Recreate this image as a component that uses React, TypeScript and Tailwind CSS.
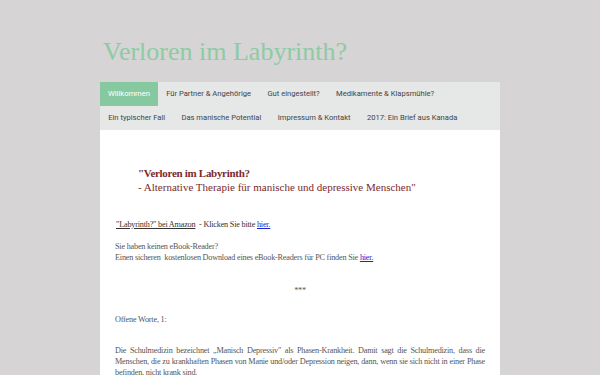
const NAV_ROW_1 = [
  { label: "Willkommen", active: true },
  { label: "Für Partner & Angehörige" },
  { label: "Gut eingestellt?" },
  { label: "Medikamente & Klapsmühle?" },
];

const NAV_ROW_2 = [
  { label: "Ein typischer Fall" },
  { label: "Das manische Potential" },
  { label: "Impressum & Kontakt" },
  { label: "2017: Ein Brief aus Kanada" },
];

function NavRow({ items }: { items: { label: string; active?: boolean }[] }) {
  return (
    <div className="flex h-6 items-stretch">
      {items.map((item) => (
        <a
          key={item.label}
          href="#"
          className={
            item.active
              ? "flex items-center whitespace-nowrap bg-[#86c9a1] px-[8px] text-white"
              : "flex items-center whitespace-nowrap px-[8.2px] text-[#444]"
          }
        >
          {item.label}
        </a>
      ))}
    </div>
  );
}

export default function App() {
  return (
    <div className="min-h-[375px] bg-[#d6d4d4] [font-family:'Liberation_Serif',serif]">
      <div className="mx-auto w-[400px]">
        <header className="h-[82px] pl-[3px] pt-[39px]">
          <h1 className="text-[26px] leading-none text-[#8dcba4]">Verloren im Labyrinth?</h1>
        </header>

        <nav className="bg-[#e6e7e7] text-[7.6px] [font-family:Roboto,sans-serif]">
          <NavRow items={NAV_ROW_1} />
          <NavRow items={NAV_ROW_2} />
        </nav>

        <main className="bg-white px-[15px] pb-4 pt-[36px] text-[8.2px] leading-[11px] tracking-[-0.2px] text-[#555]">
          <div className="pl-[23px] text-[11px] leading-[14px] tracking-normal text-[#7b2a2a]">
            <p className="font-bold tracking-[-0.3px]">"Verloren im Labyrinth?</p>
            <p>- Alternative Therapie für manische und depressive Menschen"</p>
          </div>

          <p className="mt-[25px] pl-[1px] text-[#333]">
            <span className="underline">"Labyrinth?" bei Amazon</span>
            &nbsp; - Klicken Sie bitte{" "}
            <a href="#" className="text-[#2222cc] underline">
              hier.
            </a>
          </p>

          <p className="mt-[11px]">
            Sie haben keinen eBook-Reader?
            <br />
            Einen sicheren&nbsp; kostenlosen Download eines eBook-Readers für PC finden Sie{" "}
            <a href="#" className="text-[#2222cc] underline">
              hier.
            </a>
          </p>

          <p className="mt-[22px] text-center">***</p>

          <p className="mt-[18px]">Offene Worte, 1:</p>

          <p className="mt-[20px] text-justify">
            Die Schulmedizin bezeichnet „Manisch Depressiv" als Phasen-Krankheit. Damit sagt die
            Schulmedizin, dass die Menschen, die zu krankhaften Phasen von Manie und/oder
            Depression neigen, dann, wenn sie sich nicht in einer Phase befinden, nicht krank sind.
          </p>
        </main>
      </div>
    </div>
  );
}
